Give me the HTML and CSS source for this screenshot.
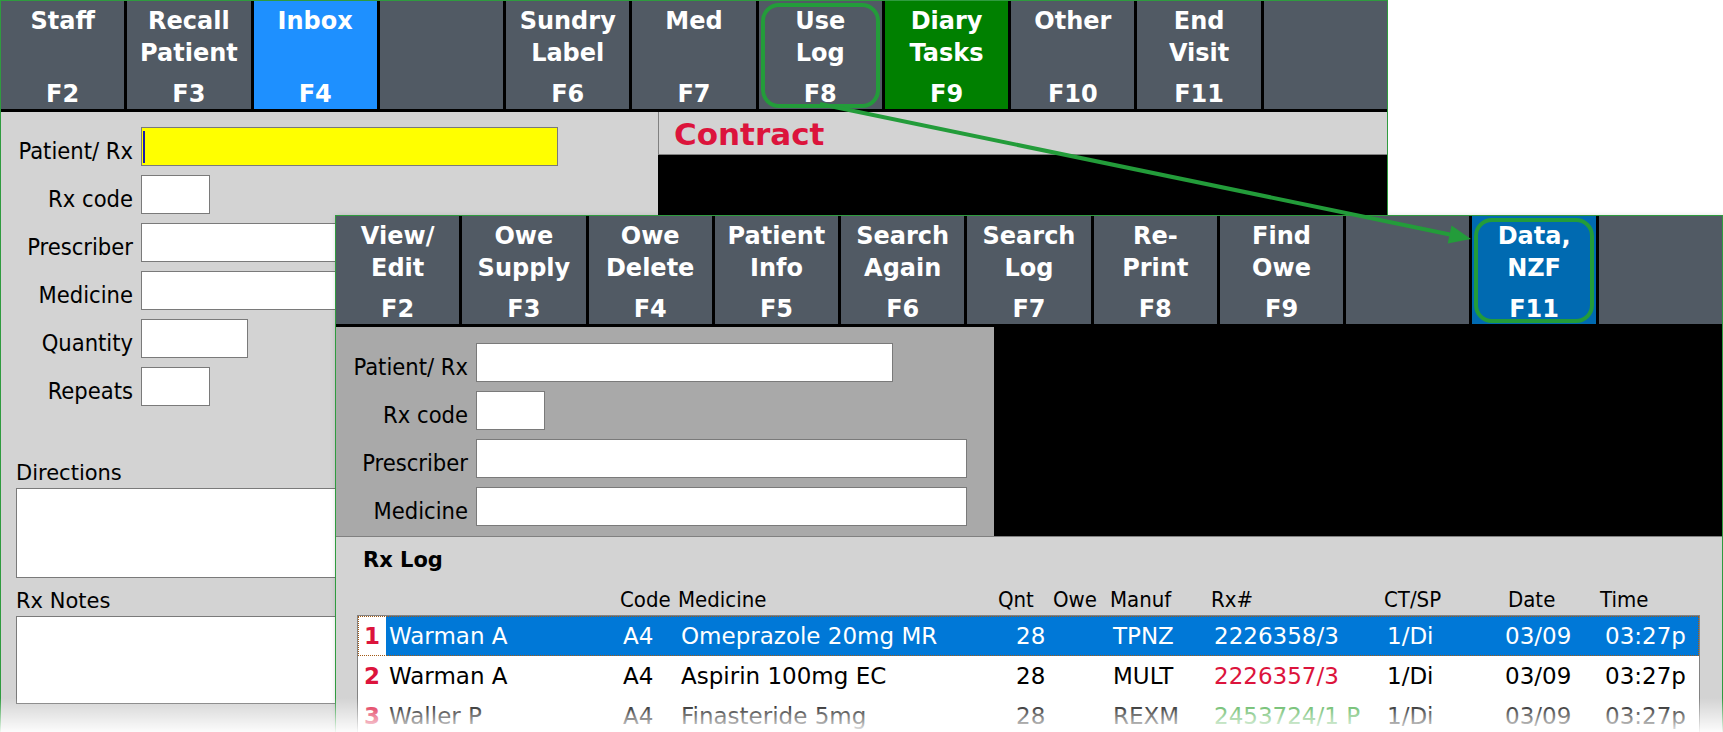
FILE: index.html
```html
<!DOCTYPE html>
<html lang="en">
  <head>
    <meta charset="UTF-8" />
    <title>Dispensary</title>
    <link rel="stylesheet" href="styles.css">
  </head>
  <body>
    <div class="desk">
      <!-- back window: dispense screen -->
      <section class="win win-main">
        <div class="toolbar">
          <div class="fkey"><span>Staff</span><span class="key">F2</span></div>
          <div class="fkey"><span>Recall<br>Patient</span><span class="key">F3</span></div>
          <div class="fkey inbox"><span>Inbox</span><span class="key">F4</span></div>
          <div class="fkey"></div>
          <div class="fkey"><span>Sundry<br>Label</span><span class="key">F6</span></div>
          <div class="fkey"><span>Med</span><span class="key">F7</span></div>
          <div class="fkey ring"><span>Use<br>Log</span><span class="key">F8</span></div>
          <div class="fkey diary"><span>Diary<br>Tasks</span><span class="key">F9</span></div>
          <div class="fkey"><span>Other</span><span class="key">F10</span></div>
          <div class="fkey"><span>End<br>Visit</span><span class="key">F11</span></div>
          <div class="fkey"></div>
        </div>
        <div class="main-body">
          <div class="form-panel">
            <div class="field"><span class="cap">Patient/ Rx</span><span class="box w-long focus"><i class="caret"></i></span></div>
            <div class="field"><span class="cap">Rx code</span><span class="box w-code"></span></div>
            <div class="field"><span class="cap">Prescriber</span><span class="box w-long"></span></div>
            <div class="field"><span class="cap">Medicine</span><span class="box w-long"></span></div>
            <div class="field"><span class="cap">Quantity</span><span class="box w-qty"></span></div>
            <div class="field"><span class="cap">Repeats</span><span class="box w-code"></span></div>
            <div class="notes">
              <div class="note-cap">Directions</div>
              <div class="note-box"></div>
              <div class="note-cap">Rx Notes</div>
              <div class="note-box short"></div>
            </div>
          </div>
          <div class="side">
            <div class="contract">Contract</div>
          </div>
        </div>
      </section>

      <!-- front window: Rx log -->
      <section class="win win-log">
        <div class="toolbar">
          <div class="fkey"><span>View/<br>Edit</span><span class="key">F2</span></div>
          <div class="fkey"><span>Owe<br>Supply</span><span class="key">F3</span></div>
          <div class="fkey"><span>Owe<br>Delete</span><span class="key">F4</span></div>
          <div class="fkey"><span>Patient<br>Info</span><span class="key">F5</span></div>
          <div class="fkey"><span>Search<br>Again</span><span class="key">F6</span></div>
          <div class="fkey"><span>Search<br>Log</span><span class="key">F7</span></div>
          <div class="fkey"><span>Re-<br>Print</span><span class="key">F8</span></div>
          <div class="fkey"><span>Find<br>Owe</span><span class="key">F9</span></div>
          <div class="fkey"></div>
          <div class="fkey nzf ring"><span>Data,<br>NZF</span><span class="key">F11</span></div>
          <div class="fkey"></div>
        </div>
        <div class="log-top">
          <div class="log-form">
            <div class="field"><span class="cap">Patient/ Rx</span><span class="box w-long"></span></div>
            <div class="field"><span class="cap">Rx code</span><span class="box w-code"></span></div>
            <div class="field"><span class="cap">Prescriber</span><span class="box w-wide"></span></div>
            <div class="field"><span class="cap">Medicine</span><span class="box w-wide"></span></div>
          </div>
          <div class="log-black"></div>
        </div>
        <div class="log-area">
          <div class="log-title">Rx Log</div>
          <div class="cols">
            <span></span><span></span>
            <span>Code</span><span>Medicine</span><span>Qnt</span><span>Owe</span><span>Manuf</span>
            <span>Rx#</span><span>CT/SP</span><span class="c-date">Date</span><span class="c-time">Time</span>
          </div>
          <div class="list">
            <div class="item sel">
              <span class="num">1</span><span>Warman A</span><span>A4</span><span>Omeprazole 20mg MR</span>
              <span class="qnt">28</span><span></span><span>TPNZ</span><span>2226358/3</span>
              <span>1/Di</span><span class="date">03/09</span><span>03:27p</span>
            </div>
            <div class="item">
              <span class="num">2</span><span>Warman A</span><span>A4</span><span>Aspirin 100mg EC</span>
              <span class="qnt">28</span><span></span><span>MULT</span><span class="red">2226357/3</span>
              <span>1/Di</span><span class="date">03/09</span><span>03:27p</span>
            </div>
            <div class="item">
              <span class="num">3</span><span>Waller P</span><span>A4</span><span>Finasteride 5mg</span>
              <span class="qnt">28</span><span></span><span>REXM</span><span class="green">2453724/1 P</span>
              <span>1/Di</span><span class="date">03/09</span><span>03:27p</span>
            </div>
          </div>
        </div>
      </section>

      <svg class="arrow" width="1723" height="732" viewBox="0 0 1723 732">
        <line x1="820" y1="104" x2="1451" y2="234.7" stroke="#239c3a" stroke-width="4" />
        <polygon points="1471,239 1447.7,243.5 1451.5,225.5" fill="#239c3a" />
      </svg>
      <div class="fade"></div>
    </div>
  </body>
</html>
```

FILE: styles.css
```css
* {
  margin: 0;
  padding: 0;
  box-sizing: border-box;
}
body {
  background: #fff;
  font-family: "DejaVu Sans", sans-serif;
}
.desk {
  position: relative;
  width: 1723px;
  height: 732px;
  overflow: hidden;
}
.win {
  position: absolute;
  width: 1388px;
  border: 1px solid #2f9b3f;
  border-bottom: 0;
  display: flex;
  flex-direction: column;
}
.win-main {
  left: 0;
  top: 0;
  height: 760px;
}
.win-log {
  left: 335px;
  top: 215px;
  height: 560px;
  box-shadow: 2px 2px 6px rgba(0, 0, 0, 0.25);
}

/* function key bar */
.toolbar {
  flex: none;
  height: 111px;
  display: grid;
  grid-template-columns: repeat(11, 1fr);
  column-gap: 3px;
  background: #000;
  padding-bottom: 3px;
}
.fkey {
  position: relative;
  display: flex;
  flex-direction: column;
  align-items: center;
  text-align: center;
  padding-top: 4px;
  background: #515a64;
  color: #fff;
  font: bold 24px/32px "DejaVu Sans", sans-serif;
}
.fkey .key {
  margin-top: auto;
  line-height: 30px;
}
.fkey.inbox {
  background: #1e90ff;
}
.fkey.diary {
  background: #008000;
}
.fkey.nzf {
  background: #006ab1;
}
.fkey.ring::after {
  content: "";
  position: absolute;
  top: 2px;
  left: 2px;
  right: 2px;
  bottom: 1px;
  border: 4px solid #239c3a;
  border-radius: 18px;
}

/* form fields */
.field {
  display: flex;
  align-items: center;
  gap: 8px;
  height: 39px;
  margin-bottom: 9px;
}
.cap {
  width: 132px;
  padding-top: 9px;
  text-align: right;
  font-family: "DejaVu Sans Condensed", "DejaVu Sans", sans-serif;
  font-stretch: condensed;
  font-size: 23.5px;
  color: #000;
}
.box {
  height: 39px;
  background: #fff;
  border: 1px solid #7a7a7a;
}
.box.focus {
  background: #ff0;
  display: flex;
  align-items: center;
}
.caret {
  width: 2px;
  height: 32px;
  margin-left: 1px;
  background: #1c1ca8;
}
.w-long {
  width: 417px;
}
.w-code {
  width: 69px;
}
.w-qty {
  width: 107px;
}
.w-wide {
  width: 491px;
}

/* back window body */
.main-body {
  flex: 1;
  display: flex;
}
.form-panel {
  width: 657px;
  background: #d3d3d3;
  padding-top: 15px;
}
.notes {
  padding: 45px 0 0 15px;
}
.note-cap {
  font-size: 21px;
  line-height: 26px;
  margin-bottom: 2px;
}
.note-box {
  width: 640px;
  height: 90px;
  margin-bottom: 10px;
  background: #fff;
  border: 1px solid #7a7a7a;
}
.note-box.short {
  height: 88px;
}
.side {
  flex: 1;
  background: #000;
}
.contract {
  height: 43px;
  padding: 2px 0 0 15px;
  background: #d3d3d3;
  border-left: 1px solid #808080;
  border-bottom: 1px solid #808080;
  color: #dc143c;
  font: bold 31px/40px "DejaVu Sans", sans-serif;
}

/* front window body */
.log-top {
  flex: none;
  height: 210px;
  display: flex;
  border-bottom: 1px solid #808080;
}
.log-form {
  width: 658px;
  background: #a9a9a9;
  padding-top: 16px;
}
.log-black {
  flex: 1;
  background: #000;
}
.log-area {
  flex: 1;
  background: #d3d3d3;
  padding: 10px 22px 0 21px;
}
.log-title {
  padding-left: 6px;
  font: bold 21px/26px "DejaVu Sans", sans-serif;
}
.cols,
.item {
  display: grid;
  grid-template-columns: 28px 234px 58px 320px 55px 57px 101px 173px 120px 98px 98px;
  white-space: nowrap;
}
.cols {
  margin-top: 14px;
  padding-left: 1px;
  font-family: "DejaVu Sans Condensed", "DejaVu Sans", sans-serif;
  font-stretch: condensed;
  font-size: 22px;
  line-height: 26px;
}
.cols .c-date {
  padding-left: 4px;
}
.cols .c-time {
  margin-left: -2px;
}
.list {
  margin-top: 2px;
  background: #fff;
  border: 1px solid #828282;
}
.item {
  height: 40px;
  align-items: center;
  font-size: 23px;
  color: #000;
}
.item span {
  padding-left: 3px;
}
.item .num {
  padding-left: 0;
  text-align: center;
  align-self: stretch;
  line-height: 40px;
  color: #dc143c;
  font-weight: bold;
}
.item .qnt {
  padding-left: 18px;
}
.item .date {
  padding-left: 1px;
}
.item.sel {
  background: #0078d7;
  color: #fff;
  outline: 1px dotted #a35a14;
  outline-offset: -1px;
}
.item.sel .num {
  background: #fff;
}
.red {
  color: #dc143c;
}
.green {
  color: #4cae4c;
}

/* overlays */
.arrow {
  position: absolute;
  left: 0;
  top: 0;
  pointer-events: none;
}
.fade {
  position: absolute;
  left: 0;
  right: 0;
  bottom: 0;
  height: 34px;
  background: linear-gradient(rgba(255, 255, 255, 0), rgba(255, 255, 255, 0.93));
}
```
